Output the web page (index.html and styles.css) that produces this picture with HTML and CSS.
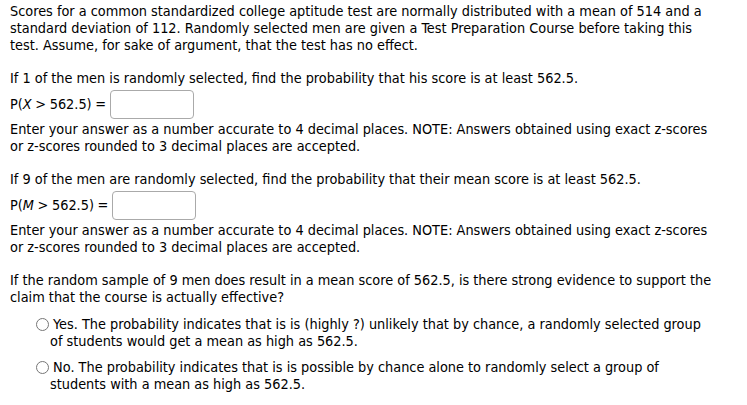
FILE: index.html
```html
<!DOCTYPE html>
<html>
<head>
<meta charset="utf-8">
<link rel="stylesheet" href="styles.css">
</head>
<body>
<div class="question">
  <p class="para">Scores for a common standardized college aptitude test are normally distributed with a mean of 514 and a standard deviation of 112. Randomly selected men are given a Test Preparation Course before taking this test. Assume, for sake of argument, that the test has no effect.</p>

  <p class="para gap">If 1 of the men is randomly selected, find the probability that his score is at least 562.5.</p>
  <div class="answer-row">
    <span class="expr">P(<i class="var">X</i> &gt; 562.5) =</span>
    <input class="answer" type="text" aria-label="P(X > 562.5)">
  </div>
  <p class="para">Enter your answer as a number accurate to 4 decimal places. NOTE: Answers obtained using exact z-scores or z-scores rounded to 3 decimal places are accepted.</p>

  <p class="para gap">If 9 of the men are randomly selected, find the probability that their mean score is at least 562.5.</p>
  <div class="answer-row">
    <span class="expr">P(<i class="var">M</i> &gt; 562.5) =</span>
    <input class="answer" type="text" aria-label="P(M > 562.5)">
  </div>
  <p class="para">Enter your answer as a number accurate to 4 decimal places. NOTE: Answers obtained using exact z-scores or z-scores rounded to 3 decimal places are accepted.</p>

  <p class="para gap">If the random sample of 9 men does result in a mean score of 562.5, is there strong evidence to support the claim that the course is actually effective?</p>
  <ul class="choices">
    <li class="choice"><label><input type="radio" name="q3" class="radio"> Yes. The probability indicates that is is (highly ?) unlikely that by chance, a randomly selected group of students would get a mean as high as 562.5.</label></li>
    <li class="choice"><label><input type="radio" name="q3" class="radio"> No. The probability indicates that is is possible by chance alone to randomly select a group of students with a mean as high as 562.5.</label></li>
  </ul>
</div>
</body>
</html>
```

FILE: styles.css
```css
html, body {
  margin: 0;
  padding: 0;
  background: #fff;
}
body {
  font-family: "DejaVu Sans", sans-serif;
  font-stretch: condensed;
  font-size: 14.35px;
  line-height: 17px;
  color: #000;
}
.question {
  width: 704px;
  padding: 3px 0 0 10px;
}
.para {
  margin: 0;
}
.gap {
  margin-top: 16px;
}
.answer-row {
  display: flex;
  align-items: center;
  gap: 4px;
  height: 34px;
}
.expr {
  word-spacing: -0.5px;
}
.var {
  font-style: italic;
}
.answer {
  width: 80px;
  height: 27px;
  margin: 0;
  padding: 0 1px;
  border: 1px solid #aaa;
  border-radius: 4px;
  box-sizing: content-box;
  font: inherit;
}
.choices {
  list-style: none;
  margin: 10px 0 0 0;
  padding: 0 0 0 40px;
}
.choice {
  margin-bottom: 9px;
}
.choice label {
  display: block;
}
.radio {
  width: 13px;
  height: 13px;
  margin: 0 0 0 -14px;
  vertical-align: -2px;
}
```
